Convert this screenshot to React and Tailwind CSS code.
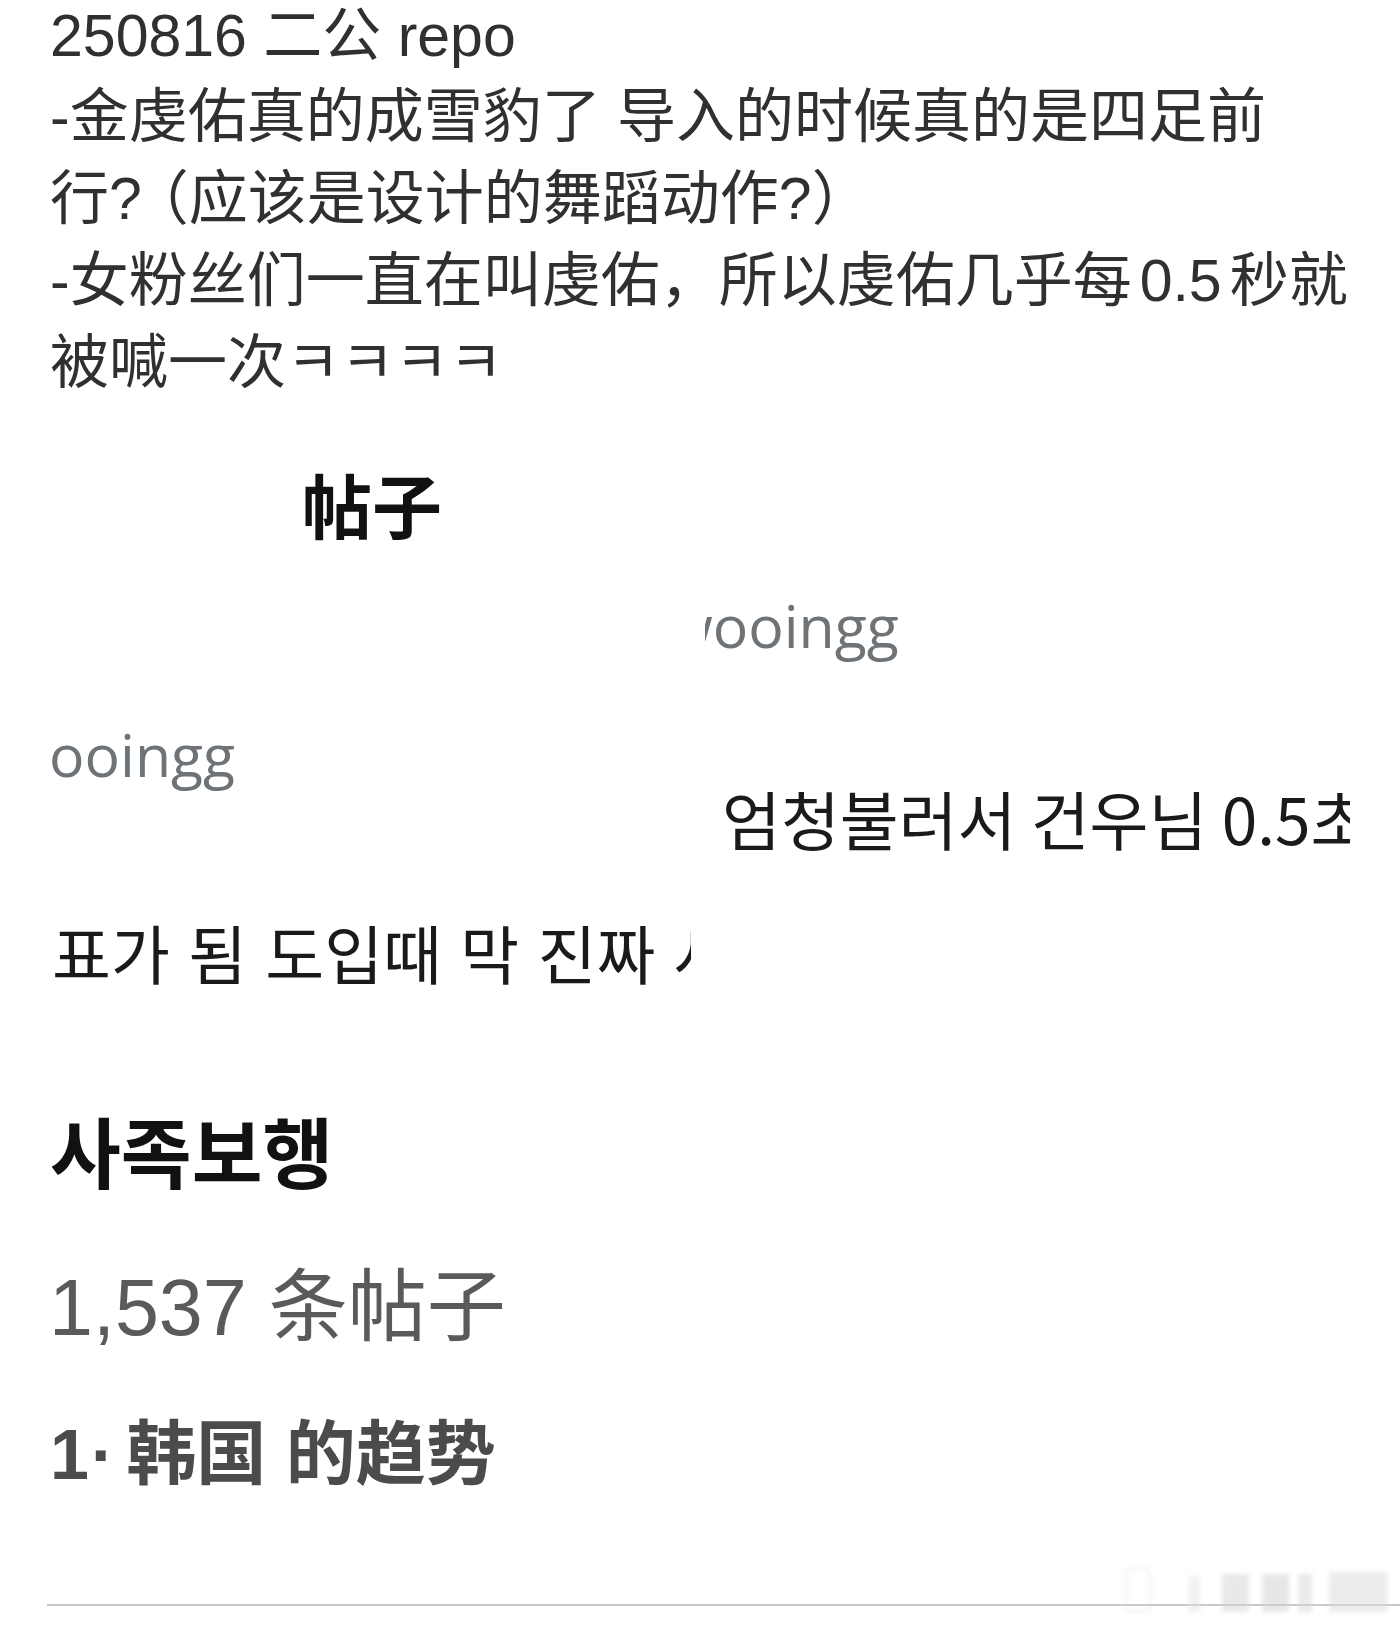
import React from 'react';

export default function App() {
  return (
    <div className="w-[1400px] h-[1628px] bg-white overflow-hidden">
      {/* REPO TEXT */}
      <div className="pt-[8px] pl-[50px] text-[59px] text-[#303030] whitespace-nowrap font-['Liberation_Sans','Noto_Sans_CJK_SC',sans-serif]">
        <div className="h-[68px] leading-[56px]">250816 二公 repo</div>
        <div className="h-[82px] leading-[82px]">-金虔佑真的成雪豹了 导入的时候真的是四足前</div>
        <div className="h-[82px] leading-[82px]">
          行<span className="tracking-[-12px]">?</span>（应该是设计的舞蹈动作?）
        </div>
        <div className="h-[82px] leading-[82px]">
          -女粉丝们一直在叫虔佑，所以虔佑几乎每<span className="mx-[8px]">0.5</span>秒就
        </div>
        <div className="h-[82px] leading-[82px]">被喊一次ㅋㅋㅋㅋ</div>
      </div>

      {/* TWEET CUTOUTS */}
      <div className="mt-[65px] ml-[302px] h-[70px] text-[70px] leading-none font-bold text-[#111] font-['Noto_Sans_CJK_SC',sans-serif]">
        帖子
      </div>

      <div className="mt-[46px] ml-[705px] w-[300px] h-[80px] overflow-hidden">
        <div className="-ml-[38px] text-[59px] leading-[80px] text-[#6e7378] whitespace-nowrap font-['Open_Sans',sans-serif]">
          wooingg
        </div>
      </div>

      <div className="mt-[63px] ml-[49px] h-[52px] text-[59px] leading-[52px] text-[#6e7378] font-['Open_Sans',sans-serif]">
        ooingg
      </div>

      <div className="mt-[1px] ml-[722px] w-[628px] h-[72px] overflow-hidden">
        <div className="text-[64px] leading-[72px] text-[#1a1a1a] whitespace-nowrap font-['Noto_Sans_CJK_KR',sans-serif]">
          엄청불러서 건우님 0.5초
        </div>
      </div>

      <div className="mt-[62px] ml-[52px] w-[639px] h-[72px] overflow-hidden">
        <div className="text-[64px] leading-[72px] text-[#1a1a1a] whitespace-nowrap [word-spacing:4px] font-['Noto_Sans_CJK_KR',sans-serif]">
          표가 됨 도입때 막 진짜 사족보행
        </div>
      </div>

      {/* TREND CARD */}
      <div className="mt-[124px] ml-[50px] h-[77px] text-[77px] leading-none font-bold text-[#111] font-['Noto_Sans_CJK_KR',sans-serif]">
        사족보행
      </div>

      <div className="mt-[80px] ml-[49px] h-[79px] text-[79px] leading-none text-[#5a5a5a] whitespace-nowrap font-['Liberation_Sans','Noto_Sans_CJK_SC',sans-serif]">
        1,537 条帖子
      </div>

      <div className="mt-[73px] ml-[50px] h-[70px] text-[70px] leading-none font-bold text-[#4b4b4b] whitespace-nowrap font-['Liberation_Sans','Noto_Sans_CJK_SC',sans-serif]">
        1<span className="ml-[2px] mr-[12px]">·</span>韩国 的趋势
      </div>

      {/* DIVIDER + WATERMARK */}
      <div className="relative mt-[114px]">
        <div className="ml-[47px] h-[2px] bg-[#c9c9c9]"></div>
        <div className="absolute left-[1125px] top-[-36px] flex items-end opacity-50 blur-[2px]">
          <div className="w-[26px] h-[44px] rounded-[5px] border-2 border-[#e0e0e0]"></div>
          <div className="ml-[38px] w-[11px] h-[36px] bg-[#e3e3e3]"></div>
          <div className="ml-[22px] w-[27px] h-[38px] bg-[#d4d4d4]"></div>
          <div className="ml-[13px] w-[27px] h-[38px] bg-[#d0d0d0]"></div>
          <div className="ml-[9px] w-[14px] h-[38px] bg-[#d6d6d6]"></div>
          <div className="ml-[17px] w-[58px] h-[40px] bg-[#dadada]"></div>
        </div>
      </div>
    </div>
  );
}
